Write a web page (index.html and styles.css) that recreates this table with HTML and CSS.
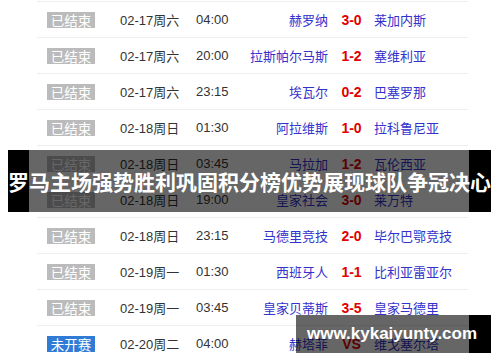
FILE: index.html
```html
<!DOCTYPE html>
<html lang="zh-CN">
<head>
<meta charset="utf-8">
<title>罗马主场强势胜利巩固积分榜优势展现球队争冠决心</title>
<link rel="stylesheet" href="styles.css">
</head>
<body>
<div class="page">
  <div class="list">
    <div class="row"><span class="st"><span class="badge">已结束</span></span><span class="date">02-17周六</span><span class="time">04:00</span><span class="home">赫罗纳</span><span class="score">3-0</span><span class="away">莱加内斯</span></div>
    <div class="row"><span class="st"><span class="badge">已结束</span></span><span class="date">02-17周六</span><span class="time">20:00</span><span class="home">拉斯帕尔马斯</span><span class="score">1-2</span><span class="away">塞维利亚</span></div>
    <div class="row"><span class="st"><span class="badge">已结束</span></span><span class="date">02-17周六</span><span class="time">23:15</span><span class="home">埃瓦尔</span><span class="score">0-2</span><span class="away">巴塞罗那</span></div>
    <div class="row"><span class="st"><span class="badge">已结束</span></span><span class="date">02-18周日</span><span class="time">01:30</span><span class="home">阿拉维斯</span><span class="score">1-0</span><span class="away">拉科鲁尼亚</span></div>
    <div class="row"><span class="st"><span class="badge">已结束</span></span><span class="date">02-18周日</span><span class="time">03:45</span><span class="home">马拉加</span><span class="score">1-2</span><span class="away">瓦伦西亚</span></div>
    <div class="row"><span class="st"><span class="badge">已结束</span></span><span class="date">02-18周日</span><span class="time">19:00</span><span class="home">皇家社会</span><span class="score">3-0</span><span class="away">莱万特</span></div>
    <div class="row"><span class="st"><span class="badge">已结束</span></span><span class="date">02-18周日</span><span class="time">23:15</span><span class="home">马德里竞技</span><span class="score">2-0</span><span class="away">毕尔巴鄂竞技</span></div>
    <div class="row"><span class="st"><span class="badge">已结束</span></span><span class="date">02-19周一</span><span class="time">01:30</span><span class="home">西班牙人</span><span class="score">1-1</span><span class="away">比利亚雷亚尔</span></div>
    <div class="row"><span class="st"><span class="badge">已结束</span></span><span class="date">02-19周一</span><span class="time">03:45</span><span class="home">皇家贝蒂斯</span><span class="score">3-5</span><span class="away">皇家马德里</span></div>
    <div class="row"><span class="st"><span class="badge badge-soon">未开赛</span></span><span class="date">02-20周二</span><span class="time">04:00</span><span class="home">赫塔菲</span><span class="score">VS</span><span class="away">维戈塞尔塔</span></div>
  </div>
  <div class="headline">罗马主场强势胜利巩固积分榜优势展现球队争冠决心</div>
  <div class="watermark">www.kykaiyunty.com</div>
</div>
</body>
</html>
```
FILE: styles.css
```css
* { box-sizing: border-box; }
html, body { margin: 0; padding: 0; background: #fff; }
body {
  width: 500px;
  height: 362px;
  overflow: hidden;
  font-family: "Liberation Sans", "Noto Sans CJK SC", sans-serif;
}
.page {
  position: relative;
  width: 500px;
  height: 362px;
  padding: 1px 32px 0 37px;
}
.list { width: 431px; }
.row {
  display: grid;
  grid-template-columns: 83px 76px 40px 92px 46px 1fr;
  align-items: center;
  height: 36px;
  border-top: 1px solid #eeeeee;
  font-size: 13px;
  color: #333;
  white-space: nowrap;
}
.st { padding-left: 10px; display: flex; }
.badge {
  display: inline-flex;
  align-items: center;
  justify-content: center;
  width: 48px;
  height: 16px;
  background: #bbbbbb;
  color: #fff;
  font-size: 13.5px;
  font-family: "Noto Sans CJK SC", sans-serif;
  line-height: 16px;
}
.badge-soon { background: #2f7bd6; }
.date, .time { color: #333; }
.home, .away {
  color: #3333cc;
  font-family: "Noto Sans CJK SC", sans-serif;
}
.home { text-align: right; }
.away { text-align: left; }
.score {
  text-align: center;
  color: #e00000;
  font-weight: bold;
  font-size: 14px;
  padding-left: 1px;
}
.headline {
  position: absolute;
  left: 8px;
  top: 150px;
  width: 483px;
  height: 62px;
  background: linear-gradient(to right, #000 0 21px, rgba(0,0,0,0.6) 21px 461px, #000 461px);
  color: #fff;
  font-family: "Noto Sans CJK SC", sans-serif;
  font-weight: bold;
  font-size: 21px;
  line-height: 62px;
  text-align: center;
  white-space: nowrap;
}
.watermark {
  position: absolute;
  left: 296px;
  top: 315px;
  width: 195px;
  height: 38px;
  background: linear-gradient(to right, rgba(0,0,0,0.6) 0 173px, #000 173px);
  color: #fff;
  font-weight: bold;
  font-size: 17px;
  line-height: 38px;
  padding-left: 11px;
  white-space: nowrap;
}
```
